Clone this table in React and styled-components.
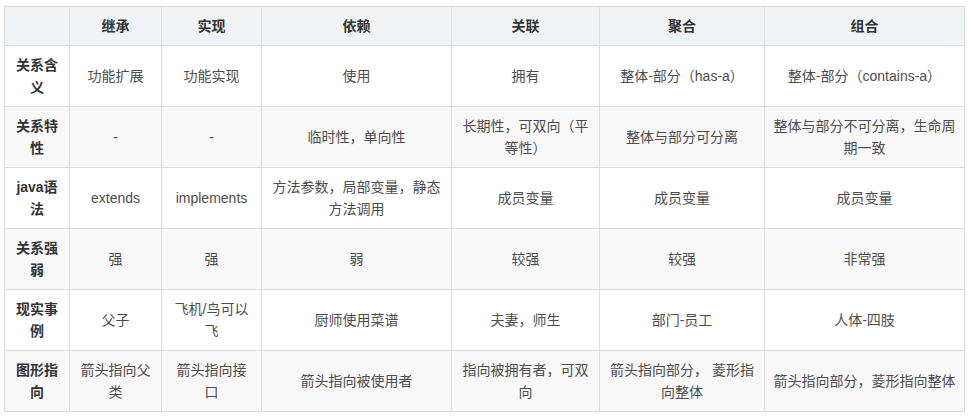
import React from "react";
import styled, { createGlobalStyle } from "styled-components";

const Global = createGlobalStyle`
  html, body { margin: 0; padding: 0; background: #ffffff; }
  body {
    font-family: "Liberation Sans", "Noto Sans CJK SC", Arial, sans-serif;
    font-size: 14px;
    color: #4d4d4d;
  }
`;

const Wrap = styled.div`
  padding: 6px 0 0 4px;
`;

const Table = styled.table`
  border-collapse: collapse;
  table-layout: fixed;
  width: 961px;
`;

const HeadCell = styled.th`
  background: #eff3f5;
  border: 1px solid #dddddd;
  padding: 8px;
  line-height: 22px;
  font-weight: bold;
  color: #333333;
  text-align: center;
  vertical-align: middle;
`;

const Row = styled.tr`
  background: ${(p) => (p.$alt ? "#f8f8f8" : "#ffffff")};
`;

const Cell = styled.td`
  border: 1px solid #dddddd;
  padding: 8px;
  line-height: 22px;
  text-align: center;
  vertical-align: middle;
  word-break: break-all;
  font-weight: ${(p) => (p.$label ? "bold" : "normal")};
  color: ${(p) => (p.$label ? "#333333" : "#4d4d4d")};
`;

const widths = [65, 92, 100, 190, 148, 165, 200];
const headers = ["", "继承", "实现", "依赖", "关联", "聚合", "组合"];
const rows = [
  ["关系含义", "功能扩展", "功能实现", "使用", "拥有", "整体-部分（has-a）", "整体-部分（contains-a）"],
  ["关系特性", "-", "-", "临时性，单向性", "长期性，可双向（平等性）", "整体与部分可分离", "整体与部分不可分离，生命周期一致"],
  ["java语法", "extends", "implements", "方法参数，局部变量，静态方法调用", "成员变量", "成员变量", "成员变量"],
  ["关系强弱", "强", "强", "弱", "较强", "较强", "非常强"],
  ["现实事例", "父子", "飞机/鸟可以飞", "厨师使用菜谱", "夫妻，师生", "部门-员工", "人体-四肢"],
  ["图形指向", "箭头指向父类", "箭头指向接口", "箭头指向被使用者", "指向被拥有者，可双向", "箭头指向部分， 菱形指向整体", "箭头指向部分，菱形指向整体"],
];

export default function App() {
  return (
    <Wrap>
      <Global />
      <Table>
        <colgroup>
          {widths.map((w, i) => (
            <col key={i} style={{ width: w }} />
          ))}
        </colgroup>
        <thead>
          <tr>
            {headers.map((h, i) => (
              <HeadCell key={i}>{h}</HeadCell>
            ))}
          </tr>
        </thead>
        <tbody>
          {rows.map((r, i) => (
            <Row key={i} $alt={i % 2 === 1}>
              {r.map((c, j) => (
                <Cell key={j} $label={j === 0}>
                  {c}
                </Cell>
              ))}
            </Row>
          ))}
        </tbody>
      </Table>
    </Wrap>
  );
}
